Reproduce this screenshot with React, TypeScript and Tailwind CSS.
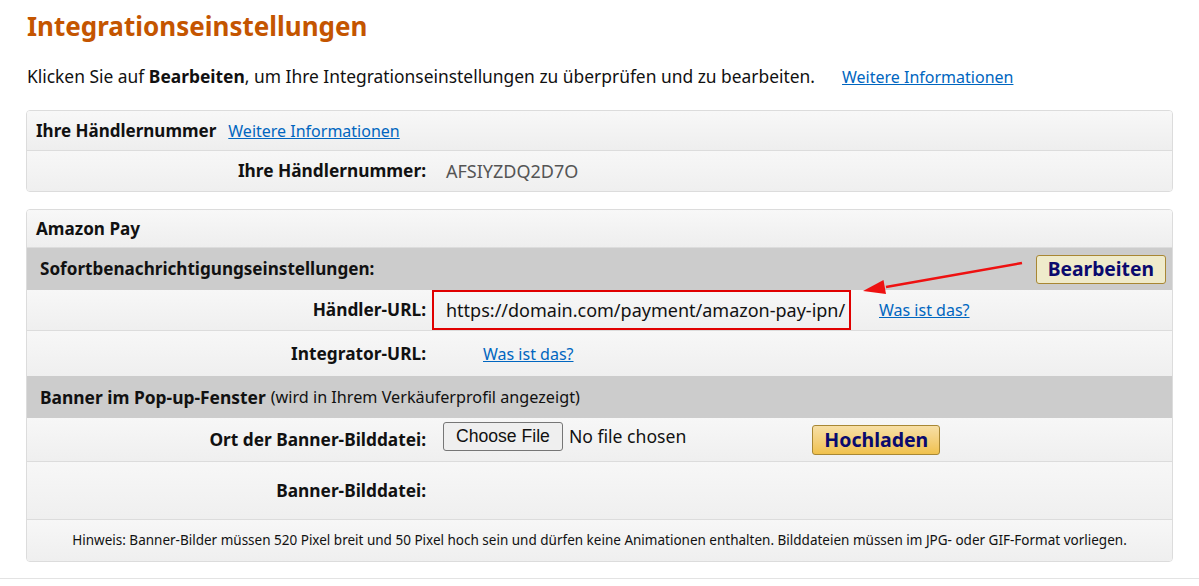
import React from 'react';

const font = { fontFamily: '"Noto Sans", "Open Sans", sans-serif' };

function Label({ children }: { children: React.ReactNode }) {
  return <div className="w-[417px] shrink-0 pr-[18px] text-right text-[17.3px] font-bold text-[#111]">{children}</div>;
}

function Row({ children, className = '' }: { children: React.ReactNode; className?: string }) {
  return (
    <div className={`flex items-center border-b border-[#dcdcdc] bg-gradient-to-b from-[#f7f7f7] to-[#efefef] ${className}`}>
      {children}
    </div>
  );
}

export default function App() {
  return (
    <div className="min-h-[586px] bg-white text-[17.4px] text-[#111]" style={font}>
      <div className="pl-[27px] pt-[8px]">
        <h1 className="text-[26px] font-bold leading-[36px] text-[#c45500]">Integrationseinstellungen</h1>
        <p className="mt-[21px] leading-[22px]">
          Klicken Sie auf <b>Bearbeiten</b>, um Ihre Integrationseinstellungen zu überprüfen und zu bearbeiten.
          <a href="#" className="ml-[27px] text-[16px] text-[#0066c0] underline">Weitere Informationen</a>
        </p>
      </div>

      {/* Händlernummer box */}
      <div className="ml-[26px] mt-[22px] w-[1147px] overflow-hidden rounded-[4px] border border-[#dcdcdc]">
        <div className="flex h-[40px] items-center border-b border-[#dcdcdc] bg-gradient-to-b from-[#f8f8f8] to-[#eeeeee] pl-[9px]">
          <span className="text-[17px] font-bold">Ihre Händlernummer</span>
          <a href="#" className="ml-[12px] text-[16px] text-[#0066c0] underline">Weitere Informationen</a>
        </div>
        <Row className="h-[40px] border-b-0">
          <Label>Ihre Händlernummer:</Label>
          <span className="pl-[2px] text-[18px] text-[#555]">AFSIYZDQ2D7O</span>
        </Row>
      </div>

      {/* Amazon Pay box */}
      <div className="relative ml-[26px] mt-[17px] w-[1147px] overflow-hidden rounded-[4px] border border-[#dcdcdc]">
        <div className="flex h-[38px] items-center border-b border-[#dcdcdc] bg-gradient-to-b from-[#f8f8f8] to-[#eeeeee] pl-[9px]">
          <span className="text-[17.1px] font-bold">Amazon Pay</span>
        </div>
        <div className="flex h-[42px] items-center justify-between bg-[#cccccc] pl-[13px] pr-[6px]">
          <span className="text-[17.1px] font-bold">Sofortbenachrichtigungseinstellungen:</span>
          <button className="h-[29px] rounded-[3px] border border-[#a88734] bg-[#efebcb] px-[11px] text-[19.3px] font-bold leading-none text-[#0a0a6e]">
            Bearbeiten
          </button>
        </div>
        <Row className="h-[40px] border-b-0">
          <Label>Händler-URL:</Label>
          <div className="-ml-[12px] flex h-[40px] w-[419px] items-center border-2 border-[#e00000] pl-[12px] text-[18px]">
            https://domain.com/payment/amazon-pay-ipn/
          </div>
          <a href="#" className="ml-[28px] text-[16px] text-[#0066c0] underline">Was ist das?</a>
        </Row>
        <Row className="h-[46px] border-t border-[#dcdcdc] border-b-0">
          <Label>Integrator-URL:</Label>
          <a href="#" className="ml-[39px] text-[16px] text-[#0066c0] underline">Was ist das?</a>
        </Row>
        <div className="flex h-[42px] items-center bg-[#cccccc] pl-[13px]">
          <span className="text-[17.4px] font-bold">Banner im Pop-up-Fenster</span>
          <span className="ml-[5px] text-[16.2px]">(wird in Ihrem Verkäuferprofil angezeigt)</span>
        </div>
        <Row className="h-[44px]">
          <Label>Ort der Banner-Bilddatei:</Label>
          <div className="flex items-center self-start pt-[4px]">
            <span className="ml-[-1px] rounded-[3px] border border-[#767676] bg-[#efefef] px-[12px] py-[2px] text-[17.6px] leading-[23px]" style={{ fontFamily: '"Liberation Sans", Arial, sans-serif' }}>
              Choose File
            </span>
            <span className="ml-[6px] text-[17.6px]">No file chosen</span>
          </div>
          <button className="ml-[126px] h-[30px] rounded-[3px] border border-[#a88734] bg-gradient-to-b from-[#f7dfa5] to-[#f0c14b] px-[11px] text-[19.5px] font-bold leading-none text-[#0a0a6e]">
            Hochladen
          </button>
        </Row>
        <Row className="h-[58px]">
          <Label>Banner-Bilddatei:</Label>
        </Row>
        <div className="flex h-[41px] items-center justify-center bg-gradient-to-b from-[#f7f7f7] to-[#efefef] text-[13.5px]">
          Hinweis: Banner-Bilder müssen 520 Pixel breit und 50 Pixel hoch sein und dürfen keine Animationen enthalten. Bilddateien müssen im JPG- oder GIF-Format vorliegen.
        </div>

        <svg className="pointer-events-none absolute left-[823px] top-[40px]" width="200" height="60" viewBox="0 0 200 60">
          <line x1="172" y1="13" x2="36" y2="37" stroke="#ee1111" strokeWidth="2.5" />
          <polygon points="13,41 36,44 33.5,30" fill="#ee1111" />
        </svg>
      </div>

      <div className="mt-[16px] border-t border-[#e3e3e3]" />
    </div>
  );
}
